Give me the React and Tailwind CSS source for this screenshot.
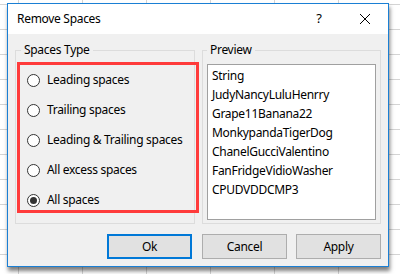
import React from 'react';

const options = [
    'Leading spaces',
    'Trailing spaces',
    'Leading & Trailing spaces',
    'All excess spaces',
    'All spaces',
];

const previewRows = [
    'String',
    'JudyNancyLuluHenrry',
    'Grape11Banana22',
    'MonkypandaTigerDog',
    'ChanelGucciValentino',
    'FanFridgeVidioWasher',
    'CPUDVDDCMP3',
];

function Radio({ checked }) {
    return (
        <span className="w-[13px] h-[13px] rounded-full border border-[#333] bg-white flex items-center justify-center shrink-0">
            {checked && <span className="w-[7px] h-[7px] rounded-full bg-[#333]"></span>}
        </span>
    );
}

function Button({ label, primary }) {
    return (
        <button
            className={
                primary
                    ? 'w-[85px] h-[25px] bg-[#e1e1e1] border-2 border-[#0078d7] text-black'
                    : 'w-[85px] h-[25px] bg-[#e1e1e1] border border-[#adadad] text-black'
            }
        >
            {label}
        </button>
    );
}

export default function App() {
    const selected = 4;

    return (
        <div className="w-[400px] h-[274px] overflow-hidden bg-white bg-[linear-gradient(to_right,#d4d4d4_1px,transparent_1px),linear-gradient(to_bottom,#d4d4d4_1px,transparent_1px)] bg-size-[64px_25px] bg-position-[18px_4px] pt-[3px] pl-[7px] font-['Segoe_UI','Noto_Sans',sans-serif] text-[12px] tracking-[-0.3px] text-black">
            {/* Dialog window */}
            <div className="w-[382px] h-[264px] border border-[#1a7fd4] bg-[#f0f0f0] flex flex-col shadow-[1px_4px_4px_rgba(0,0,0,0.5)]">
                {/* Title bar */}
                <div className="h-[30px] bg-white flex items-center shrink-0">
                    <span className="pl-[9px] flex-1 leading-none">Remove Spaces</span>
                    <span className="w-[46px] h-full flex items-center justify-center text-[13px]">?</span>
                    <span className="w-[46px] h-full flex items-center justify-center">
                        <svg width="10" height="10" viewBox="0 0 10 10" fill="none" stroke="#000" strokeWidth="1">
                            <path d="M0 0L10 10M10 0L0 10" />
                        </svg>
                    </span>
                </div>

                {/* Body */}
                <div className="flex-1 px-[7px] pt-[8px] flex flex-col">
                    <div className="flex gap-[7px]">
                        <fieldset className="w-[180px] h-[182px] min-w-0 border border-[#dcdcdc]">
                            <legend className="ml-[5px] px-[3px] leading-[16px]">Spaces Type</legend>
                            <div className="mt-[4px] ml-[1px] w-[182px] h-[151px] border-[3px] border-[#ff3b3b] pt-[7px] pl-[7px] flex flex-col gap-[14px]">
                                {options.map((opt, i) => (
                                    <label key={opt} className="flex items-center gap-[7px] h-[16px]">
                                        <Radio checked={i === selected} />
                                        <span className="leading-[16px] whitespace-nowrap">{opt}</span>
                                    </label>
                                ))}
                            </div>
                        </fieldset>

                        <fieldset className="w-[179px] h-[182px] min-w-0 border border-[#dcdcdc]">
                            <legend className="ml-[4px] px-[3px] leading-[16px]">Preview</legend>
                            <div className="mt-[6px] mx-[4px] h-[156px] bg-white border border-[#a0a0a0] pl-[4px] pt-[1px]">
                                {previewRows.map((row) => (
                                    <div key={row} className="leading-[19px] whitespace-nowrap">{row}</div>
                                ))}
                            </div>
                        </fieldset>
                    </div>

                    {/* Buttons */}
                    <div className="mt-[10px] flex justify-end">
                        <Button label="Ok" primary />
                        <div className="ml-[10px]"><Button label="Cancel" /></div>
                        <div className="ml-[9px]"><Button label="Apply" /></div>
                    </div>
                </div>
            </div>
        </div>
    );
}
